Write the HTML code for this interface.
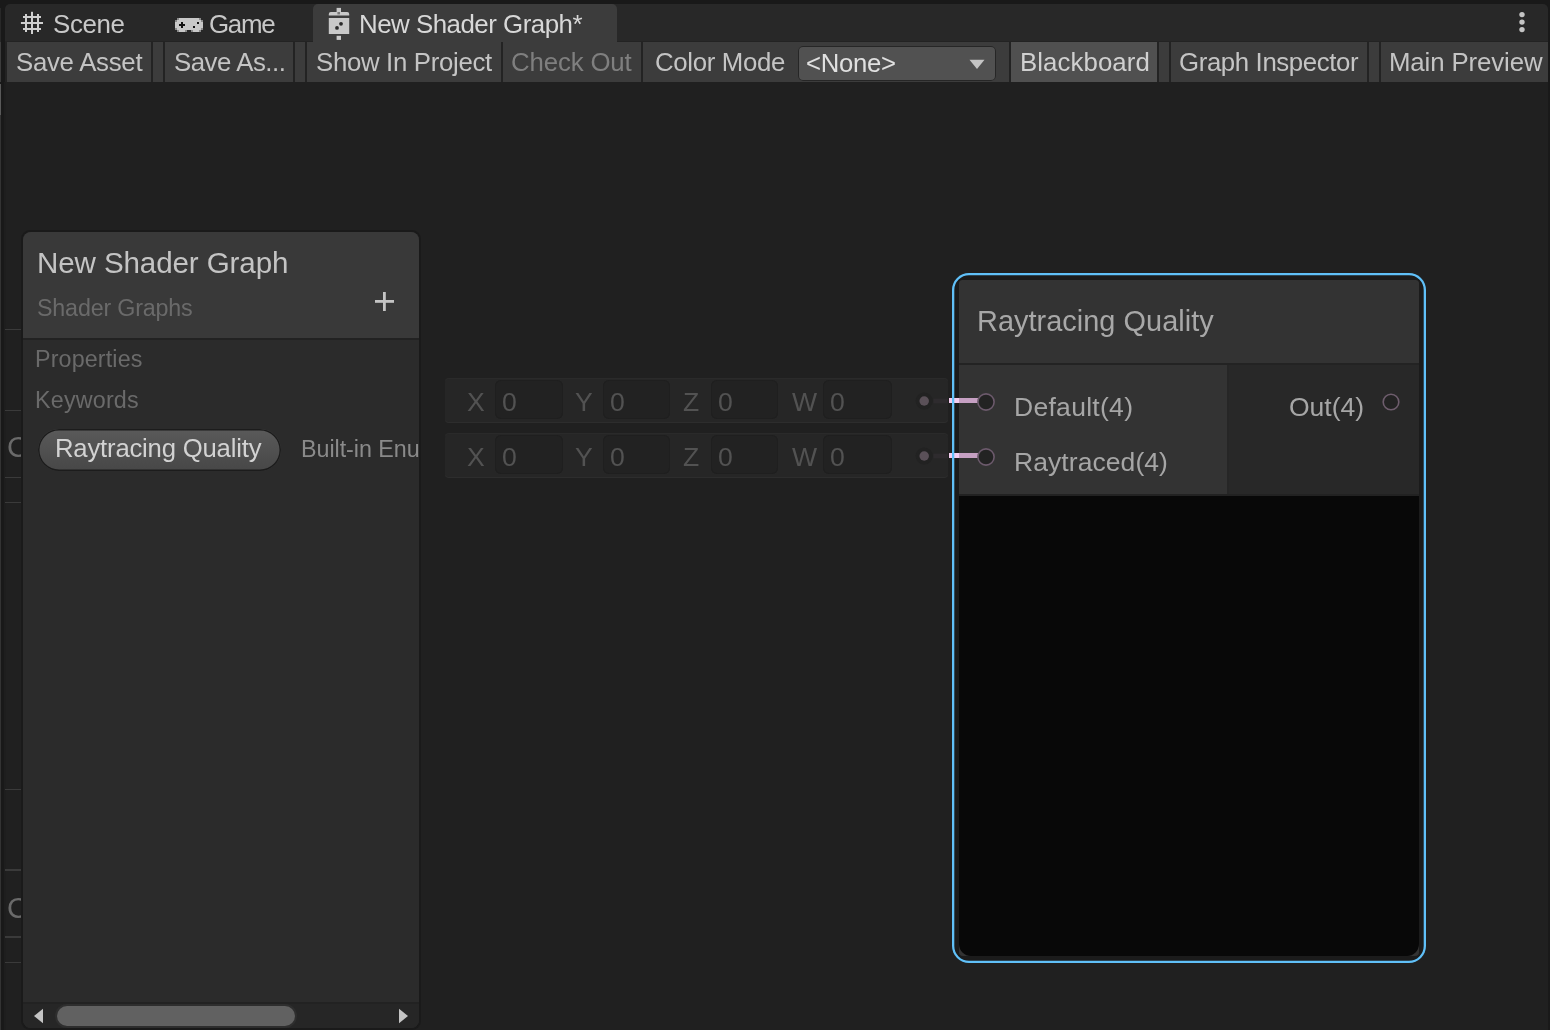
<!DOCTYPE html>
<html><head><meta charset="utf-8"><style>
html,body{margin:0;padding:0;}
body{width:1550px;height:1030px;position:relative;overflow:hidden;background:#191919;font-family:"Liberation Sans",sans-serif;}
body>div,body>svg,div>div{position:absolute;}
.t{white-space:pre;line-height:1;will-change:transform;}
</style></head><body>
<div style="left:0px;top:8px;width:1px;height:34px;background:#282828;"></div>
<div style="left:0px;top:42px;width:1px;height:40px;background:#3c3c3c;"></div>
<div style="left:0px;top:84px;width:1px;height:31px;background:#595959;"></div>
<div style="left:0px;top:115px;width:1px;height:915px;background:#333333;"></div>
<div style="left:5px;top:4px;width:1543px;height:38px;background:#282828;border-radius:5px 5px 0 0;"></div>
<div style="left:5px;top:41px;width:1543px;height:1px;background:#232323;"></div>
<div style="left:313px;top:4px;width:304px;height:38px;background:#3c3c3c;border-radius:5px 5px 0 0;"></div>
<div style="left:5px;top:42px;width:1543px;height:40px;background:#232323;"></div>
<div style="left:7px;top:42px;width:144px;height:40px;background:#3c3c3c;"></div>
<div style="left:153px;top:42px;width:10px;height:40px;background:#3c3c3c;"></div>
<div style="left:165px;top:42px;width:128px;height:40px;background:#3c3c3c;"></div>
<div style="left:295px;top:42px;width:10px;height:40px;background:#3c3c3c;"></div>
<div style="left:307px;top:42px;width:194px;height:40px;background:#3c3c3c;"></div>
<div style="left:503px;top:42px;width:138px;height:40px;background:#3c3c3c;"></div>
<div style="left:643px;top:42px;width:366px;height:40px;background:#3c3c3c;"></div>
<div style="left:1011px;top:42px;width:146px;height:40px;background:#505050;"></div>
<div style="left:1159px;top:42px;width:10px;height:40px;background:#3c3c3c;"></div>
<div style="left:1171px;top:42px;width:196px;height:40px;background:#3c3c3c;"></div>
<div style="left:1369px;top:42px;width:10px;height:40px;background:#3c3c3c;"></div>
<div style="left:1381px;top:42px;width:167px;height:40px;background:#3c3c3c;"></div>
<div style="left:4px;top:82px;width:2px;height:948px;background:#1e1e1e;"></div>
<div style="left:6px;top:82px;width:1542px;height:948px;background:#202020;"></div>
<svg style="left:20px;top:11px" width="25" height="25" viewBox="0 0 25 25">
<g fill="#cfcfcf"><rect x="5" y="3" width="2" height="18"/><rect x="11" y="0.8" width="2" height="22.2"/><rect x="17" y="3" width="2" height="18"/>
<rect x="3" y="5" width="18" height="2"/><rect x="0.9" y="11" width="22.1" height="2"/><rect x="3" y="17" width="18" height="2"/></g></svg>
<svg style="left:175px;top:18px" width="28" height="14" viewBox="0 0 28 14" shape-rendering="crispEdges"><rect x="2" y="0" width="2" height="2" fill="#8a8a8a"/><rect x="4" y="0" width="2" height="2" fill="#c8c8c8"/><rect x="6" y="0" width="2" height="2" fill="#c8c8c8"/><rect x="8" y="0" width="2" height="2" fill="#c8c8c8"/><rect x="10" y="0" width="2" height="2" fill="#c8c8c8"/><rect x="12" y="0" width="2" height="2" fill="#c8c8c8"/><rect x="14" y="0" width="2" height="2" fill="#c8c8c8"/><rect x="16" y="0" width="2" height="2" fill="#c8c8c8"/><rect x="18" y="0" width="2" height="2" fill="#c8c8c8"/><rect x="20" y="0" width="2" height="2" fill="#c8c8c8"/><rect x="22" y="0" width="2" height="2" fill="#c8c8c8"/><rect x="24" y="0" width="2" height="2" fill="#8a8a8a"/><rect x="0" y="2" width="2" height="2" fill="#8a8a8a"/><rect x="2" y="2" width="2" height="2" fill="#c8c8c8"/><rect x="4" y="2" width="2" height="2" fill="#c8c8c8"/><rect x="6" y="2" width="2" height="2" fill="#c8c8c8"/><rect x="8" y="2" width="2" height="2" fill="#c8c8c8"/><rect x="10" y="2" width="2" height="2" fill="#c8c8c8"/><rect x="12" y="2" width="2" height="2" fill="#c8c8c8"/><rect x="14" y="2" width="2" height="2" fill="#c8c8c8"/><rect x="16" y="2" width="2" height="2" fill="#c8c8c8"/><rect x="18" y="2" width="2" height="2" fill="#c8c8c8"/><rect x="20" y="2" width="2" height="2" fill="#c8c8c8"/><rect x="22" y="2" width="2" height="2" fill="#c8c8c8"/><rect x="24" y="2" width="2" height="2" fill="#c8c8c8"/><rect x="26" y="2" width="2" height="2" fill="#8a8a8a"/><rect x="0" y="4" width="2" height="2" fill="#c8c8c8"/><rect x="2" y="4" width="2" height="2" fill="#c8c8c8"/><rect x="4" y="4" width="2" height="2" fill="#c8c8c8"/><rect x="8" y="4" width="2" height="2" fill="#c8c8c8"/><rect x="10" y="4" width="2" height="2" fill="#c8c8c8"/><rect x="12" y="4" width="2" height="2" fill="#c8c8c8"/><rect x="14" y="4" width="2" height="2" fill="#c8c8c8"/><rect x="16" y="4" width="2" height="2" fill="#c8c8c8"/><rect x="18" y="4" width="2" height="2" fill="#c8c8c8"/><rect x="20" y="4" width="2" height="2" fill="#c8c8c8"/><rect x="24" y="4" width="2" height="2" fill="#c8c8c8"/><rect x="26" y="4" width="2" height="2" fill="#c8c8c8"/><rect x="6" y="4" width="2" height="2" fill="#111111"/><rect x="22" y="4" width="2" height="2" fill="#111111"/><rect x="0" y="6" width="2" height="2" fill="#c8c8c8"/><rect x="2" y="6" width="2" height="2" fill="#c8c8c8"/><rect x="10" y="6" width="2" height="2" fill="#c8c8c8"/><rect x="12" y="6" width="2" height="2" fill="#c8c8c8"/><rect x="14" y="6" width="2" height="2" fill="#c8c8c8"/><rect x="16" y="6" width="2" height="2" fill="#c8c8c8"/><rect x="18" y="6" width="2" height="2" fill="#c8c8c8"/><rect x="20" y="6" width="2" height="2" fill="#c8c8c8"/><rect x="22" y="6" width="2" height="2" fill="#c8c8c8"/><rect x="24" y="6" width="2" height="2" fill="#c8c8c8"/><rect x="26" y="6" width="2" height="2" fill="#c8c8c8"/><rect x="4" y="6" width="2" height="2" fill="#111111"/><rect x="6" y="6" width="2" height="2" fill="#111111"/><rect x="8" y="6" width="2" height="2" fill="#111111"/><rect x="0" y="8" width="2" height="2" fill="#c8c8c8"/><rect x="2" y="8" width="2" height="2" fill="#c8c8c8"/><rect x="4" y="8" width="2" height="2" fill="#c8c8c8"/><rect x="8" y="8" width="2" height="2" fill="#c8c8c8"/><rect x="10" y="8" width="2" height="2" fill="#c8c8c8"/><rect x="12" y="8" width="2" height="2" fill="#c8c8c8"/><rect x="14" y="8" width="2" height="2" fill="#c8c8c8"/><rect x="16" y="8" width="2" height="2" fill="#c8c8c8"/><rect x="20" y="8" width="2" height="2" fill="#c8c8c8"/><rect x="22" y="8" width="2" height="2" fill="#c8c8c8"/><rect x="24" y="8" width="2" height="2" fill="#c8c8c8"/><rect x="26" y="8" width="2" height="2" fill="#c8c8c8"/><rect x="6" y="8" width="2" height="2" fill="#111111"/><rect x="18" y="8" width="2" height="2" fill="#111111"/><rect x="0" y="10" width="2" height="2" fill="#8a8a8a"/><rect x="2" y="10" width="2" height="2" fill="#c8c8c8"/><rect x="4" y="10" width="2" height="2" fill="#c8c8c8"/><rect x="6" y="10" width="2" height="2" fill="#c8c8c8"/><rect x="8" y="10" width="2" height="2" fill="#c8c8c8"/><rect x="10" y="10" width="2" height="2" fill="#c8c8c8"/><rect x="12" y="10" width="2" height="2" fill="#c8c8c8"/><rect x="14" y="10" width="2" height="2" fill="#c8c8c8"/><rect x="16" y="10" width="2" height="2" fill="#c8c8c8"/><rect x="18" y="10" width="2" height="2" fill="#c8c8c8"/><rect x="20" y="10" width="2" height="2" fill="#c8c8c8"/><rect x="22" y="10" width="2" height="2" fill="#c8c8c8"/><rect x="24" y="10" width="2" height="2" fill="#c8c8c8"/><rect x="26" y="10" width="2" height="2" fill="#8a8a8a"/><rect x="2" y="12" width="2" height="2" fill="#8a8a8a"/><rect x="4" y="12" width="2" height="2" fill="#c8c8c8"/><rect x="6" y="12" width="2" height="2" fill="#c8c8c8"/><rect x="8" y="12" width="2" height="2" fill="#c8c8c8"/><rect x="10" y="12" width="2" height="2" fill="#8a8a8a"/><rect x="16" y="12" width="2" height="2" fill="#8a8a8a"/><rect x="18" y="12" width="2" height="2" fill="#c8c8c8"/><rect x="20" y="12" width="2" height="2" fill="#c8c8c8"/><rect x="22" y="12" width="2" height="2" fill="#c8c8c8"/><rect x="24" y="12" width="2" height="2" fill="#8a8a8a"/></svg>
<svg style="left:327px;top:7px" width="24" height="34" viewBox="0 0 24 34">
<g fill="#c8c8c8"><rect x="9.6" y="0.9" width="4.4" height="4.2"/><path d="M1.8 8.6 L1.8 7 Q1.8 5 3.8 5 L20.2 5 Q22.2 5 22.2 7 L22.2 8.6 Z"/>
<rect x="1.8" y="11" width="20.4" height="16"/><rect x="9.6" y="28.8" width="4.4" height="4.1"/></g>
<rect x="10.4" y="5" width="2.6" height="2.4" fill="#777"/>
<circle cx="14" cy="16.8" r="1.9" fill="#2a2a2a"/><circle cx="10" cy="20.9" r="1.9" fill="#2a2a2a"/>
</svg>
<svg style="left:1517px;top:10px" width="10" height="26" viewBox="0 0 10 26">
<g fill="#c4c4c4"><circle cx="5" cy="4.6" r="2.7"/><circle cx="5" cy="12.1" r="2.7"/><circle cx="5" cy="19.6" r="2.7"/></g></svg>
<div class="t" style="left:53.03px;top:12px;font-size:25.9px;letter-spacing:-0.365px;color:#c8c8c8;">Scene</div>
<div class="t" style="left:208.71px;top:12px;font-size:25.9px;letter-spacing:-1.306px;color:#c8c8c8;">Game</div>
<div class="t" style="left:358.66px;top:12px;font-size:25.9px;letter-spacing:-0.513px;color:#d8d8d8;">New Shader Graph*</div>
<div class="t" style="left:15.84px;top:50px;font-size:25.8px;letter-spacing:-0.279px;color:#c4c4c4;">Save Asset</div>
<div class="t" style="left:173.84px;top:50px;font-size:25.8px;letter-spacing:-0.476px;color:#c4c4c4;">Save As...</div>
<div class="t" style="left:316.04px;top:50px;font-size:25.8px;letter-spacing:-0.315px;color:#c4c4c4;">Show In Project</div>
<div class="t" style="left:511.41px;top:50px;font-size:25.8px;letter-spacing:-0.14px;color:#7f7f7f;">Check Out</div>
<div class="t" style="left:654.91px;top:50px;font-size:25.8px;letter-spacing:-0.326px;color:#c4c4c4;">Color Mode</div>
<div style="left:798px;top:46px;width:198px;height:35px;background:#515151;border-radius:5px;box-shadow:0 0 0 1px #262626 inset;"></div>
<div class="t" style="left:805.82px;top:51px;font-size:25.7px;letter-spacing:-0.284px;color:#e0e0e0;">&lt;None&gt;</div>
<svg style="left:969px;top:59px" width="16" height="11" viewBox="0 0 16 11"><path d="M0.5 0.7 L15.5 0.7 L8 10 Z" fill="#c4c4c4"/></svg>
<div class="t" style="left:1019.67px;top:50px;font-size:25.8px;letter-spacing:0.075px;color:#d0d0d0;">Blackboard</div>
<div class="t" style="left:1179.21px;top:50px;font-size:25.8px;letter-spacing:-0.379px;color:#c4c4c4;">Graph Inspector</div>
<div class="t" style="left:1388.67px;top:50px;font-size:25.8px;letter-spacing:-0.118px;color:#c4c4c4;">Main Preview</div>
<div style="left:5px;top:328.8px;width:16px;height:1.6000000000000227px;background:#3a3a3a;"></div>
<div style="left:5px;top:409.8px;width:16px;height:1.6000000000000227px;background:#3a3a3a;"></div>
<div style="left:5px;top:476.8px;width:16px;height:1.6000000000000227px;background:#3a3a3a;"></div>
<div style="left:5px;top:501.8px;width:16px;height:1.6000000000000227px;background:#3a3a3a;"></div>
<div style="left:5px;top:788.8px;width:16px;height:1.6000000000000227px;background:#3a3a3a;"></div>
<div style="left:5px;top:869.4px;width:16px;height:1.6000000000000227px;background:#3a3a3a;"></div>
<div style="left:5px;top:936.4px;width:16px;height:1.6000000000000227px;background:#3a3a3a;"></div>
<div style="left:5px;top:961.6px;width:16px;height:1.6000000000000227px;background:#3a3a3a;"></div>
<div class="t" style="left:6.55px;top:433px;font-size:29px;letter-spacing:0px;color:#6a6a6a;">C</div>
<div class="t" style="left:6.55px;top:894px;font-size:29px;letter-spacing:0px;color:#6a6a6a;">C</div>
<div style="left:21px;top:230px;width:400px;height:800px;background:#1a1a1a;border-radius:9px;"></div>
<div style="left:23px;top:232px;width:396px;height:796px;background:#2b2b2b;border-radius:8px;"></div>
<div style="left:23px;top:232px;width:396px;height:106px;background:#393939;border-radius:8px 8px 0 0;"></div>
<div style="left:23px;top:338px;width:396px;height:2px;background:#222222;"></div>
<div class="t" style="left:36.56px;top:248px;font-size:29.6px;letter-spacing:-0.127px;color:#c4c4c4;">New Shader Graph</div>
<div class="t" style="left:36.95px;top:297px;font-size:23.3px;letter-spacing:-0.189px;color:#6a6a6a;">Shader Graphs</div>
<svg style="left:374px;top:291px" width="21" height="21" viewBox="0 0 21 21"><g fill="#c4c4c4"><rect x="9" y="1" width="2.8" height="19"/><rect x="1" y="9" width="19" height="2.8"/></g></svg>
<div class="t" style="left:34.78px;top:348px;font-size:23.3px;letter-spacing:0.139px;color:#6a6a6a;">Properties</div>
<div class="t" style="left:34.58px;top:389px;font-size:23.3px;letter-spacing:0.193px;color:#6a6a6a;">Keywords</div>
<div style="left:38px;top:429px;width:243px;height:42px;background:linear-gradient(#5a5a5a,#474747);border-radius:21px;box-shadow:0 0 0 1.5px #1c1c1c inset;"></div>
<div class="t" style="left:54.68px;top:436px;font-size:25.7px;letter-spacing:-0.199px;color:#d2d2d2;">Raytracing Quality</div>
<div style="left:23px;top:425px;width:396px;height:50px;overflow:hidden">
<div class="t" style="left:277.58px;top:13px;font-size:23.3px;letter-spacing:-0.05px;color:#8a8a8a;">Built-in Enum</div>
</div>
<div style="left:23px;top:1002px;width:396px;height:2px;background:#222222;"></div>
<div style="left:23px;top:1004px;width:396px;height:24px;background:#262626;border-radius:0 0 8px 8px;"></div>
<svg style="left:33px;top:1008px" width="11" height="16" viewBox="0 0 11 16"><path d="M10 0.7 L10 15.3 L1 8 Z" fill="#c4c4c4"/></svg>
<svg style="left:398px;top:1008px" width="11" height="16" viewBox="0 0 11 16"><path d="M1 0.7 L1 15.3 L10 8 Z" fill="#c4c4c4"/></svg>
<div style="left:55px;top:1004px;width:242px;height:24px;background:#2e2e2e;border-radius:12px;"></div>
<div style="left:57px;top:1006px;width:238px;height:20px;background:#616161;border-radius:10px;"></div>
<div style="left:445px;top:378px;width:503px;height:45px;background:#262626;border-radius:4px;box-shadow:inset 0 1px 0 #2a2a2a, inset 0 -1px 0 #2d2d2d;"></div>
<div style="left:495px;top:380px;width:68px;height:39px;background:#222222;border-radius:6px;box-shadow:0 0 0 1px #1f1f1f inset;"></div>
<div style="left:603px;top:380px;width:67px;height:39px;background:#222222;border-radius:6px;box-shadow:0 0 0 1px #1f1f1f inset;"></div>
<div style="left:711px;top:380px;width:67px;height:39px;background:#222222;border-radius:6px;box-shadow:0 0 0 1px #1f1f1f inset;"></div>
<div style="left:823px;top:380px;width:69px;height:39px;background:#222222;border-radius:6px;box-shadow:0 0 0 1px #1f1f1f inset;"></div>
<div class="t" style="left:467.20px;top:389px;font-size:26.6px;letter-spacing:0px;color:#525252;">X</div>
<div class="t" style="left:575.40px;top:389px;font-size:26.6px;letter-spacing:0px;color:#525252;">Y</div>
<div class="t" style="left:683.24px;top:389px;font-size:26.6px;letter-spacing:0px;color:#525252;">Z</div>
<div class="t" style="left:791.57px;top:389px;font-size:26.6px;letter-spacing:0px;color:#525252;">W</div>
<div class="t" style="left:501.54px;top:389px;font-size:26.6px;letter-spacing:0px;color:#525252;">0</div>
<div class="t" style="left:609.54px;top:389px;font-size:26.6px;letter-spacing:0px;color:#525252;">0</div>
<div class="t" style="left:717.74px;top:389px;font-size:26.6px;letter-spacing:0px;color:#525252;">0</div>
<div class="t" style="left:830.24px;top:389px;font-size:26.6px;letter-spacing:0px;color:#525252;">0</div>
<svg style="left:913px;top:389.60px" width="40" height="22" viewBox="0 0 40 22"><rect x="20.4" y="8.7" width="14.3" height="4.6" fill="#2e2b2e"/><circle cx="11.2" cy="11" r="8.6" fill="#222222"/><circle cx="11.2" cy="11" r="4.75" fill="#5a5058"/></svg>
<div style="left:445px;top:433px;width:503px;height:45px;background:#262626;border-radius:4px;box-shadow:inset 0 1px 0 #2a2a2a, inset 0 -1px 0 #2d2d2d;"></div>
<div style="left:495px;top:435px;width:68px;height:39px;background:#222222;border-radius:6px;box-shadow:0 0 0 1px #1f1f1f inset;"></div>
<div style="left:603px;top:435px;width:67px;height:39px;background:#222222;border-radius:6px;box-shadow:0 0 0 1px #1f1f1f inset;"></div>
<div style="left:711px;top:435px;width:67px;height:39px;background:#222222;border-radius:6px;box-shadow:0 0 0 1px #1f1f1f inset;"></div>
<div style="left:823px;top:435px;width:69px;height:39px;background:#222222;border-radius:6px;box-shadow:0 0 0 1px #1f1f1f inset;"></div>
<div class="t" style="left:467.20px;top:444px;font-size:26.6px;letter-spacing:0px;color:#525252;">X</div>
<div class="t" style="left:575.40px;top:444px;font-size:26.6px;letter-spacing:0px;color:#525252;">Y</div>
<div class="t" style="left:683.24px;top:444px;font-size:26.6px;letter-spacing:0px;color:#525252;">Z</div>
<div class="t" style="left:791.57px;top:444px;font-size:26.6px;letter-spacing:0px;color:#525252;">W</div>
<div class="t" style="left:501.54px;top:444px;font-size:26.6px;letter-spacing:0px;color:#525252;">0</div>
<div class="t" style="left:609.54px;top:444px;font-size:26.6px;letter-spacing:0px;color:#525252;">0</div>
<div class="t" style="left:717.74px;top:444px;font-size:26.6px;letter-spacing:0px;color:#525252;">0</div>
<div class="t" style="left:830.24px;top:444px;font-size:26.6px;letter-spacing:0px;color:#525252;">0</div>
<svg style="left:913px;top:444.60px" width="40" height="22" viewBox="0 0 40 22"><rect x="20.4" y="8.7" width="14.3" height="4.6" fill="#2e2b2e"/><circle cx="11.2" cy="11" r="8.6" fill="#222222"/><circle cx="11.2" cy="11" r="4.75" fill="#5a5058"/></svg>
<div style="left:952px;top:273px;width:474px;height:690px;background:#1b1b1b;border-radius:17px;"></div>
<div style="left:959px;top:930px;width:460px;height:26px;background:#333333;border-radius:0 0 4px 4px;"></div>
<div style="left:959px;top:280px;width:460px;height:676px;background:#080808;border-radius:3px 3px 12px 12px;"></div>
<div style="left:959px;top:280px;width:460px;height:82.80000000000001px;background:#333333;border-radius:3px 3px 0 0;"></div>
<div style="left:959px;top:362.8px;width:460px;height:2.1999999999999886px;background:#232323;"></div>
<div style="left:959px;top:365px;width:267.5px;height:129px;background:#333333;"></div>
<div style="left:1226.5px;top:365px;width:2.0px;height:129px;background:#262626;"></div>
<div style="left:1228.5px;top:365px;width:190.5px;height:129px;background:#282828;"></div>
<div style="left:959px;top:494px;width:460px;height:2px;background:#222222;"></div>
<div class="t" style="left:976.62px;top:307px;font-size:28.9px;letter-spacing:0.038px;color:#a8a8a8;">Raytracing Quality</div>
<div class="t" style="left:1013.81px;top:394px;font-size:26.5px;letter-spacing:0.29px;color:#a6a6a6;">Default(4)</div>
<div class="t" style="left:1013.81px;top:449px;font-size:26.5px;letter-spacing:0.07px;color:#a6a6a6;">Raytraced(4)</div>
<div class="t" style="left:1288.74px;top:394px;font-size:26.5px;letter-spacing:-0.029px;color:#a6a6a6;">Out(4)</div>
<div style="left:949.2px;top:398.1px;width:9.799999999999955px;height:4.7999999999999545px;background:#f5cdf0;"></div>
<div style="left:959px;top:398.1px;width:19px;height:4.7999999999999545px;background:#c6a0c3;"></div>
<svg style="left:977.2px;top:392.60px" width="18" height="18" viewBox="0 0 18 18"><circle cx="9" cy="9" r="8.1" fill="#232323" stroke="#6c5a6c" stroke-width="1.6"/></svg>
<div style="left:949.2px;top:453.3px;width:9.799999999999955px;height:4.7999999999999545px;background:#f5cdf0;"></div>
<div style="left:959px;top:453.3px;width:19px;height:4.7999999999999545px;background:#c6a0c3;"></div>
<svg style="left:977.2px;top:447.90px" width="18" height="18" viewBox="0 0 18 18"><circle cx="9" cy="9" r="8.1" fill="#232323" stroke="#6c5a6c" stroke-width="1.6"/></svg>
<svg style="left:1382px;top:393px" width="18" height="18" viewBox="0 0 18 18"><circle cx="9" cy="9" r="7.8" fill="#232323" stroke="#6e5d6d" stroke-width="1.6"/></svg>
<div style="left:952px;top:273px;width:474px;height:690px;background:transparent;border-radius:17px;box-shadow:inset 0 0 0 2.3px #60c0f8;"></div>
</body></html>
